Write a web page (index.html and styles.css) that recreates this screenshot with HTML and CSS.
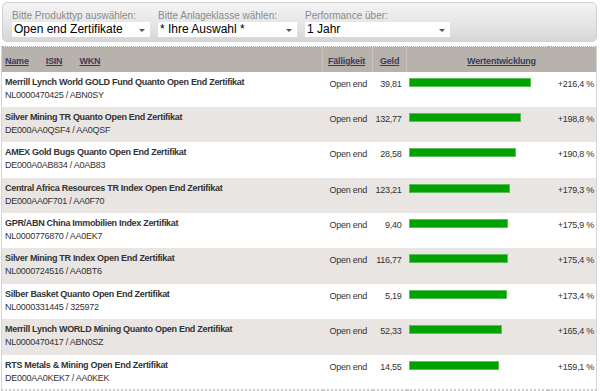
FILE: index.html
```html
<!DOCTYPE html>
<html lang="de">
<head>
  <meta charset="UTF-8">
  <meta name="viewport" content="width=device-width, initial-scale=1.0">
  <title>Open End Zertifikate</title>
  <link rel="stylesheet" href="styles.css">
</head>
<body>
  <!-- Filter -->
  <div class="filter">
    <div class="field f1">
      <label>Bitte Produkttyp auswählen:</label>
      <div class="sel">Open end Zertifikate</div>
    </div>
    <div class="field f2">
      <label>Bitte Anlageklasse wählen:</label>
      <div class="sel">* Ihre Auswahl *</div>
    </div>
    <div class="field f3">
      <label>Performance über:</label>
      <div class="sel">1 Jahr</div>
    </div>
  </div>

  <!-- Liste -->
  <table class="list">
    <thead>
      <tr>
        <th class="c-name"><a href="#">Name</a><a href="#">ISIN</a><a href="#">WKN</a></th>
        <th class="c-due"><a href="#">Fälligkeit</a></th>
        <th class="c-bid"><a href="#">Geld</a></th>
        <th class="c-perf" colspan="2"><a href="#">Wertentwicklung</a></th>
      </tr>
    </thead>
    <tbody>
      <tr>
        <td class="c-name"><b>Merrill Lynch World GOLD Fund Quanto Open End Zertifikat</b>NL0000470425 / ABN0SY</td>
        <td class="c-due">Open end</td>
        <td class="c-bid">39,81</td>
        <td class="c-bar"><span class="bar" style="width:122px"></span></td>
        <td class="c-pct">+216,4 %</td>
      </tr>
      <tr>
        <td class="c-name"><b>Silver Mining TR Quanto Open End Zertifikat</b>DE000AA0QSF4 / AA0QSF</td>
        <td class="c-due">Open end</td>
        <td class="c-bid">132,77</td>
        <td class="c-bar"><span class="bar" style="width:112px"></span></td>
        <td class="c-pct">+198,8 %</td>
      </tr>
      <tr>
        <td class="c-name"><b>AMEX Gold Bugs Quanto Open End Zertifikat</b>DE000A0AB834 / A0AB83</td>
        <td class="c-due">Open end</td>
        <td class="c-bid">28,58</td>
        <td class="c-bar"><span class="bar" style="width:107px"></span></td>
        <td class="c-pct">+190,8 %</td>
      </tr>
      <tr>
        <td class="c-name"><b>Central Africa Resources TR Index Open End Zertifikat</b>DE000AA0F701 / AA0F70</td>
        <td class="c-due">Open end</td>
        <td class="c-bid">123,21</td>
        <td class="c-bar"><span class="bar" style="width:101px"></span></td>
        <td class="c-pct">+179,3 %</td>
      </tr>
      <tr>
        <td class="c-name"><b>GPR/ABN China Immobilien Index Zertifikat</b>NL0000776870 / AA0EK7</td>
        <td class="c-due">Open end</td>
        <td class="c-bid">9,40</td>
        <td class="c-bar"><span class="bar" style="width:99px"></span></td>
        <td class="c-pct">+175,9 %</td>
      </tr>
      <tr>
        <td class="c-name"><b>Silver Mining TR Index Open End Zertifikat</b>NL0000724516 / AA0BT6</td>
        <td class="c-due">Open end</td>
        <td class="c-bid">116,77</td>
        <td class="c-bar"><span class="bar" style="width:99px"></span></td>
        <td class="c-pct">+175,4 %</td>
      </tr>
      <tr>
        <td class="c-name"><b>Silber Basket Quanto Open End Zertifikat</b>NL0000331445 / 325972</td>
        <td class="c-due">Open end</td>
        <td class="c-bid">5,19</td>
        <td class="c-bar"><span class="bar" style="width:98px"></span></td>
        <td class="c-pct">+173,4 %</td>
      </tr>
      <tr>
        <td class="c-name"><b>Merrill Lynch WORLD Mining Quanto Open End Zertifikat</b>NL0000470417 / ABN0SZ</td>
        <td class="c-due">Open end</td>
        <td class="c-bid">52,33</td>
        <td class="c-bar"><span class="bar" style="width:93px"></span></td>
        <td class="c-pct">+165,4 %</td>
      </tr>
      <tr>
        <td class="c-name"><b>RTS Metals &amp; Mining Open End Zertifikat</b>DE000AA0KEK7 / AA0KEK</td>
        <td class="c-due">Open end</td>
        <td class="c-bid">14,55</td>
        <td class="c-bar"><span class="bar" style="width:90px"></span></td>
        <td class="c-pct">+159,1 %</td>
      </tr>
    </tbody>
  </table>
</body>
</html>
```

FILE: styles.css
```css
/* reset */
* {
  margin: 0;
  padding: 0;
  box-sizing: border-box;
}
body {
  background: #fff;
  font-family: "Liberation Sans", Arial, sans-serif;
  color: #333;
  padding: 2px 3px 0 1px;
}

/* Filter */
.filter {
  display: flex;
  height: 40px;
  margin-left: 1px;
  padding: 7px 0 0 9px;
  border: 1px solid #d0d0d0;
  border-radius: 5px;
  background: linear-gradient(#f4f4f4, #e4e4e4 60%, #d6d6d6);
}
.field {
  display: flex;
  flex-direction: column;
  margin-right: 8px;
}
.field label {
  font-size: 10px;
  line-height: 11px;
  color: #8a8a8a;
}
.sel {
  position: relative;
  height: 15px;
  margin-top: 1px;
  padding: 0 0 0 2px;
  background: #fff;
  font-size: 12px;
  line-height: 15px;
  color: #000;
}
.sel::after {
  content: "";
  position: absolute;
  right: 5px;
  top: 7px;
  border-left: 3px solid transparent;
  border-right: 3px solid transparent;
  border-top: 3px solid #555;
}
.f1 .sel { width: 138px; }
.f2 .sel { width: 139px; }
.f3 .sel { width: 145px; }

/* Liste */
.list {
  width: 596px;
  margin-top: 4px;
  border-collapse: collapse;
  border-top: 1px dotted #a9a49e;
  border-left: 1px solid #d4d4d4;
  border-right: 1px solid #d4d4d4;
  border-bottom: 2px dotted #c8c8c8;
}
.list th {
  height: 25px;
  padding-top: 3px;
  background: #b7b2ac;
  font-size: 9px;
  letter-spacing: -0.2px;
  text-align: left;
  border-left: 1px dotted #d6d2cd;
}
.list th:first-child {
  border-left: none;
}
.list th a {
  color: #3c3c5c;
  text-decoration: underline;
}
.list th.c-name a {
  margin-right: 17px;
}
.list th.c-perf {
  text-align: center;
}
.list td {
  height: 35.4px;
  padding-top: 5px;
  vertical-align: top;
  font-size: 9px;
  letter-spacing: -0.25px;
  line-height: 11px;
}
.list tbody tr:nth-child(even) td {
  background: #e8e5e2;
}
.list td b {
  display: block;
  margin-bottom: 2px;
  letter-spacing: -0.3px;
}
.c-name {
  width: 321px;
  padding-left: 3px;
}
.c-due {
  width: 50px;
}
.list th.c-due {
  padding-left: 5px;
}
.list td.c-due {
  padding: 7px 0 0 7px;
}
.c-bid {
  width: 34px;
}
.list td.c-bid {
  padding: 7px 5px 0 0;
  text-align: right;
}
.list th.c-bid {
  padding-left: 7px;
}
.c-bar {
  width: 141px;
}
.list td.c-bar {
  padding: 6px 0 0 2px;
}
.bar {
  display: block;
  height: 9px;
  background: #00a200;
  border: 1px solid #5cbf5c;
}
.list td.c-pct {
  padding: 7px 2px 0 0;
  text-align: right;
}
```
